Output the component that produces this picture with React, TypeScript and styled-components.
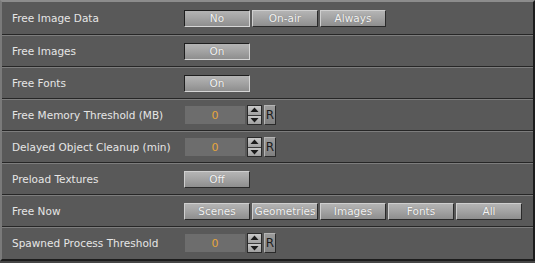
import React from 'react';
import styled, { createGlobalStyle } from 'styled-components';

const GlobalStyle = createGlobalStyle`
  html, body {
    margin: 0;
    padding: 0;
    background: #454545;
  }
  body {
    font-family: Tahoma, "DejaVu Sans", Verdana, sans-serif;
  }
`;

const Panel = styled.div`
  width: 531px;
  height: 257px;
  background: #595959;
  border-top: 2px solid #8c8c8c;
  border-left: 2px solid #7a7a7a;
  border-right: 2px solid #1c1c1c;
  border-bottom: 2px solid #1c1c1c;
  display: flex;
  flex-direction: column;
  overflow: hidden;
`;

const Row = styled.div<{ $first?: boolean }>`
  height: ${(p) => (p.$first ? '32px' : '30px')};
  display: flex;
  align-items: center;
  border-top: ${(p) => (p.$first ? '0' : '1px solid #7d7d7d')};
  border-bottom: 1px solid #262626;
  flex-shrink: 0;
  &:last-child {
    border-bottom: 0;
  }
`;

const Label = styled.div`
  width: 172px;
  padding-left: 10px;
  color: #e6e6e6;
  font-size: 10.5px;
  white-space: nowrap;
`;

const Controls = styled.div`
  display: flex;
  align-items: center;
  gap: 2px;
`;

const Button = styled.div<{ $pressed?: boolean }>`
  width: 64px;
  height: 15px;
  display: flex;
  align-items: center;
  justify-content: center;
  color: #f4f4f4;
  font-size: 10.5px;
  text-shadow: 0 0 1px rgba(0, 0, 0, 0.35);
  background: linear-gradient(#b4b4b4, #a4a4a4 45%, #8e8e8e);
  border: 1px solid;
  border-color: ${(p) =>
    p.$pressed ? '#1e1e1e #d6d6d6 #d6d6d6 #1e1e1e' : '#cfcfcf #2a2a2a #2a2a2a #cfcfcf'};
`;

const SpinField = styled.div`
  width: 60px;
  height: 18px;
  margin-left: 1px;
  background: #6d6d6d;
  display: flex;
  align-items: center;
  justify-content: center;
  color: #e6a53c;
  font-size: 11px;
`;

const Spinner = styled.div`
  width: 13px;
  height: 18px;
  display: flex;
  flex-direction: column;
  border: 1px solid #2a2a2a;
  background: #6d6d6d;
`;

const SpinHalf = styled.div`
  flex: 1;
  display: flex;
  align-items: center;
  justify-content: center;
  background: linear-gradient(#c8c8c8, #a0a0a0);
  border-bottom: 1px solid #3a3a3a;
  &:last-child {
    border-bottom: 0;
  }
`;

const ResetButton = styled.div`
  width: 10px;
  height: 18px;
  border: 1px solid #2a2a2a;
  border-top-color: #b4b4b4;
  border-left-color: #b4b4b4;
  background: linear-gradient(#9a9a9a, #808080);
  color: #1c1c1c;
  font-size: 12px;
  display: flex;
  align-items: center;
  justify-content: center;
`;

function Arrow({ up }: { up?: boolean }) {
  return (
    <svg width="9" height="6" viewBox="0 0 9 6">
      {up ? (
        <path d="M0.5 5 L4.5 0.5 L8.5 5 Z" fill="#1a1a1a" />
      ) : (
        <path d="M0.5 1 L4.5 5.5 L8.5 1 Z" fill="#1a1a1a" />
      )}
    </svg>
  );
}

function NumberSpin({ value }: { value: string }) {
  return (
    <Controls>
      <SpinField>{value}</SpinField>
      <Spinner>
        <SpinHalf>
          <Arrow up />
        </SpinHalf>
        <SpinHalf>
          <Arrow />
        </SpinHalf>
      </Spinner>
      <ResetButton>R</ResetButton>
    </Controls>
  );
}

export default function App() {
  return (
    <>
      <GlobalStyle />
      <Panel>
        <Row $first>
          <Label>Free Image Data</Label>
          <Controls>
            <Button $pressed>No</Button>
            <Button>On-air</Button>
            <Button>Always</Button>
          </Controls>
        </Row>
        <Row>
          <Label>Free Images</Label>
          <Button $pressed>On</Button>
        </Row>
        <Row>
          <Label>Free Fonts</Label>
          <Button $pressed>On</Button>
        </Row>
        <Row>
          <Label>Free Memory Threshold (MB)</Label>
          <NumberSpin value="0" />
        </Row>
        <Row>
          <Label>Delayed Object Cleanup (min)</Label>
          <NumberSpin value="0" />
        </Row>
        <Row>
          <Label>Preload Textures</Label>
          <Button>Off</Button>
        </Row>
        <Row>
          <Label>Free Now</Label>
          <Controls>
            <Button>Scenes</Button>
            <Button>Geometries</Button>
            <Button>Images</Button>
            <Button>Fonts</Button>
            <Button>All</Button>
          </Controls>
        </Row>
        <Row>
          <Label>Spawned Process Threshold</Label>
          <NumberSpin value="0" />
        </Row>
      </Panel>
    </>
  );
}
